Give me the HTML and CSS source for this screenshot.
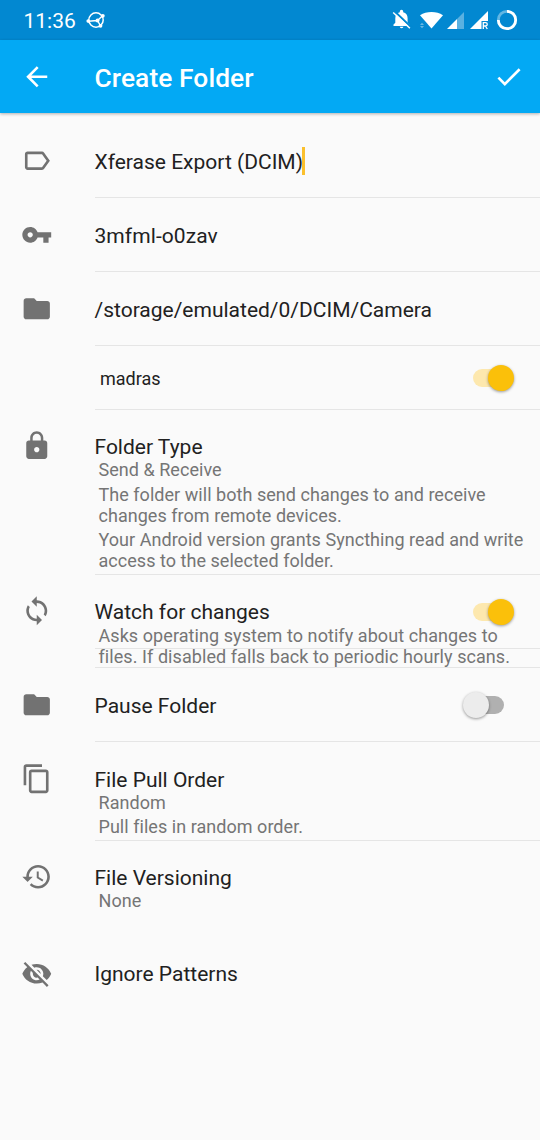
FILE: index.html
```html
<!DOCTYPE html>
<html lang="en">
<head>
<meta charset="utf-8">
<title>Create Folder</title>
<link rel="stylesheet" href="styles.css">
</head>
<body>
<div class="statusbar">
  <span class="clock">11:36</span>
  <svg class="sync-logo" viewBox="0 0 20 18" fill="none" stroke="#fff" stroke-width="1.5"><circle cx="10" cy="9" r="7.2"/><path d="M2 10.2L11.5 9.5L16.8 4.6M11.5 9.5L14.5 14.8" stroke-width="1.4"/><g fill="#fff" stroke="none"><circle cx="2.2" cy="10.1" r="1.8"/><circle cx="11.5" cy="9.5" r="2"/><circle cx="16.8" cy="4.8" r="1.9"/><circle cx="14.5" cy="14.8" r="1.9"/></g></svg>
  <svg class="status-icons" viewBox="0 0 130 40">
    <path fill="#fff" d="M393 26v-1.600l1.800-1.600v-4.600c0-3 1.700-5.200 4.500-5.900v-.8a1.700 1.700 0 0 1 3.400 0v.8c2.800.7 4.400 2.900 4.400 5.900v4.600l1.900 1.600v1.600zM399.300 26.800h3.600a1.800 1.400 0 0 1-3.600 0z" transform="translate(-389.500)"/>
    <path d="M4.500 11.300L21.500 27.500" stroke="#0288d1" stroke-width="2"/>
    <path d="M3.200 12.500L19.900 28.200" stroke="#fff" stroke-width="1.500"/>
    <path fill="#fff" d="M41.500 28.500L30 15.200Q35 12 41.500 12T53 15.200z"/>
    <path fill="#fff" opacity=".4" d="M30 25l2-2.300 2 2.300zM30 26l2 2.300 2-2.300z"/>
    <path fill="#fff" opacity=".35" d="M67 19L74 12V29H67z"/>
    <path fill="#fff" d="M57 29L67 19V29z"/>
    <path fill="#fff" d="M80 29L98 11V21H91.500V29z"/>
    <path d="M93.300 29V22.700H95.600a1.600 1.600 0 0 1 0 3.300H93.300M95.400 26L97.300 29" fill="none" stroke="#fff" stroke-width="1.300"/>
    <circle cx="117" cy="20" r="8.700" fill="none" stroke="#62b6e3" stroke-width="2.800"/>
    <path d="M117 11.300A8.700 8.700 0 1 1 108.300 20" fill="none" stroke="#fff" stroke-width="2.800"/>
  </svg>
</div>
<header class="appbar">
  <svg class="icon" viewBox="0 0 24 24"><path d="M20 11H7.830l5.590-5.590L12 4l-8 8 8 8 1.410-1.410L7.830 13H20v-2z"/></svg>
  <h1 class="appbar-title">Create Folder</h1>
  <svg class="icon" viewBox="0 0 24 24"><path d="M9 16.170L4.830 12l-1.420 1.410L9 19 21 7l-1.410-1.410z"/></svg>
</header>
<main class="form">
  <div class="row">
    <svg class="icon" viewBox="0 0 24 24"><path d="M17.630 5.840C17.270 5.330 16.670 5 16 5L5 5.010C3.900 5.010 3 5.900 3 7v10c0 1.100.9 1.990 2 1.990L16 19c.67 0 1.270-.33 1.630-.84L22 12l-4.370-6.160zM16 17H5V7h11l3.550 5L16 17z"/></svg>
    <div class="content"><div class="title label-field">Xferase Export (DCIM)<span class="caret"></span></div></div>
  </div>
  <div class="row">
    <svg class="icon" viewBox="0 0 24 24"><path d="M12.650 10C11.830 7.670 9.610 6 7 6c-3.310 0-6 2.690-6 6s2.690 6 6 6c2.610 0 4.830-1.670 5.650-4H17v4h4v-4h2v-4H12.650zM7 14c-1.100 0-2-.9-2-2s.9-2 2-2 2 .9 2 2-.9 2-2 2z"/></svg>
    <div class="content"><div class="title folder-id">3mfml-o0zav</div></div>
  </div>
  <div class="row">
    <svg class="icon" viewBox="0 0 24 24"><path d="M10 4H4c-1.100 0-1.990.9-1.990 2L2 18c0 1.100.9 2 2 2h16c1.100 0 2-.9 2-2V8c0-1.100-.9-2-2-2h-8l-2-2z"/></svg>
    <div class="content"><div class="title path">/storage/emulated/0/DCIM/Camera</div></div>
  </div>
  <div class="row device">
    <div class="content"><span class="device-name">madras</span><span class="switch on"></span></div>
  </div>
  <div class="row folder-type raised">
    <svg class="icon" viewBox="0 0 24 24"><path d="M18 8h-1V6c0-2.760-2.240-5-5-5S7 3.240 7 6v2H6c-1.100 0-2 .9-2 2v10c0 1.100.9 2 2 2h12c1.100 0 2-.9 2-2V10c0-1.100-.9-2-2-2zm-6 9c-1.100 0-2-.9-2-2s.9-2 2-2 2 .9 2 2-.9 2-2 2zm3.100-9H8.900V6c0-1.710 1.390-3.100 3.100-3.100 1.710 0 3.100 1.390 3.100 3.100v2z"/></svg>
    <div class="content">
      <div class="title">Folder Type</div>
      <p class="caption">Send &amp; Receive</p>
      <p class="caption">The folder will both send changes to and receive<br>changes from remote devices.</p>
      <p class="caption">Your Android version grants Syncthing read and write<br>access to the selected folder.</p>
    </div>
  </div>
  <div class="row watch raised">
    <svg class="icon" viewBox="0 0 24 24"><path d="M12 4V1L8 5l4 4V6c3.310 0 6 2.690 6 6 0 1.010-.25 1.970-.7 2.800l1.460 1.460C19.540 15.030 20 13.570 20 12c0-4.420-3.580-8-8-8zm0 14c-3.310 0-6-2.690-6-6 0-1.010.25-1.970.7-2.800L5.240 7.740C4.460 8.970 4 10.430 4 12c0 4.420 3.580 8 8 8v3l4-4-4-4v3z"/></svg>
    <div class="content">
      <div class="title">Watch for changes<span class="switch on"></span></div>
      <p class="caption">Asks operating system to notify about changes to<br>files. If disabled falls back to periodic hourly scans.</p>
    </div>
  </div>
  <div class="row spacer"><div class="content"></div></div>
  <div class="row">
    <svg class="icon" viewBox="0 0 24 24"><path d="M10 4H4c-1.100 0-1.990.9-1.990 2L2 18c0 1.100.9 2 2 2h16c1.100 0 2-.9 2-2V8c0-1.100-.9-2-2-2h-8l-2-2z"/></svg>
    <div class="content"><div class="title">Pause Folder<span class="switch off"></span></div></div>
  </div>
  <div class="row pull-order">
    <svg class="icon" viewBox="0 0 24 24"><path d="M16 1H4c-1.100 0-2 .9-2 2v14h2V3h12V1zm3 4H8c-1.100 0-2 .9-2 2v14c0 1.100.9 2 2 2h11c1.100 0 2-.9 2-2V7c0-1.100-.9-2-2-2zm0 16H8V7h11v14z"/></svg>
    <div class="content">
      <div class="title">File Pull Order</div>
      <p class="caption">Random</p>
      <p class="caption">Pull files in random order.</p>
    </div>
  </div>
  <div class="row versioning raised">
    <svg class="icon" viewBox="0 0 24 24"><path d="M13 3c-4.970 0-9 4.030-9 9H1l3.890 3.890.07.14L9 12H6c0-3.870 3.130-7 7-7s7 3.130 7 7-3.130 7-7 7c-1.930 0-3.680-.79-4.940-2.060l-1.420 1.420C8.270 19.990 10.510 21 13 21c4.970 0 9-4.030 9-9s-4.030-9-9-9zm-1 5v5l4.280 2.540.72-1.210-3.500-2.080V8H12z"/></svg>
    <div class="content">
      <div class="title">File Versioning</div>
      <p class="caption">None</p>
    </div>
  </div>
  <div class="row last">
    <svg class="icon" viewBox="0 0 24 24"><path d="M12 7c2.760 0 5 2.240 5 5 0 .65-.13 1.260-.36 1.830l2.920 2.920c1.510-1.260 2.700-2.890 3.430-4.750-1.730-4.390-6-7.500-11-7.500-1.400 0-2.740.25-3.980.7l2.160 2.160C10.740 7.130 11.350 7 12 7zM2 4.270l2.280 2.280.46.46C3.080 8.300 1.780 10.020 1 12c1.730 4.390 6 7.500 11 7.500 1.550 0 3.030-.3 4.380-.84l.42.42L19.730 22 21 20.730 3.270 3 2 4.270zM7.530 9.800l1.550 1.550c-.05.21-.08.43-.08.65 0 1.660 1.340 3 3 3 .22 0 .44-.03.65-.08l1.550 1.550c-.67.33-1.410.53-2.200.53-2.760 0-5-2.240-5-5 0-.79.2-1.530.53-2.200zm4.310-.78l3.150 3.150.02-.16c0-1.660-1.340-3-3-3l-.17.010z"/></svg>
    <div class="content"><div class="title">Ignore Patterns</div></div>
  </div>
</main>
</body>
</html>
```

FILE: styles.css
```css
body {
  margin: 0;
  height: 1140px;
  background: #fafafa;
  color: #212121;
  font-family: Roboto, sans-serif;
  overflow: hidden;
}

.statusbar {
  display: flex;
  align-items: center;
  height: 40px;
  padding-left: 23.5px;
  background: #0288d1;
  color: #fff;
}

.clock {
  width: 62px;
  padding-top: 2px;
  font-size: 21px;
  line-height: 38px;
}

.sync-logo {
  width: 20px;
  height: 18px;
}

.status-icons {
  width: 130px;
  height: 40px;
  margin-left: auto;
  margin-right: 20px;
}

.appbar {
  display: flex;
  align-items: center;
  height: 73px;
  padding: 0 16px 0 21px;
  background: #03a9f4;
  box-shadow: 0 1px 3px rgba(0, 0, 0, .3);
}

.appbar .icon {
  fill: #fff;
}

.appbar-title {
  flex: 1;
  margin: 2px 0 0 42px;
  color: #fff;
  font-size: 26.3px;
  font-weight: 500;
  letter-spacing: .1px;
}

.icon {
  flex: none;
  width: 31.5px;
  height: 31.5px;
  fill: #727272;
}

.form {
  padding-top: 11px;
}

.row {
  display: flex;
  height: 74px;
  padding-left: 21px;
}

.row > .icon {
  margin-top: 21px;
}

.content {
  box-sizing: border-box;
  flex: 1;
  height: 100%;
  margin-left: 42px;
  padding-top: 25px;
  border-bottom: 1px solid #e5e5e5;
}

.title {
  display: flex;
  align-items: center;
  height: 25px;
  font-size: 21px;
  white-space: nowrap;
}

.caret {
  width: 3px;
  height: 28px;
  margin: -2px 0 0 -1px;
  background: #fbc02d;
}

.folder-id {
  letter-spacing: .07px;
}

.caption {
  margin: 3.5px 0 0 4px;
  color: #757575;
  font-size: 18px;
  letter-spacing: .04px;
  line-height: 21px;
  white-space: nowrap;
}

.title + .caption {
  margin-top: 0;
}

.raised > .icon {
  margin-top: 20px;
}

.raised .content {
  padding-top: 24px;
}

.last .content {
  padding-top: 24.5px;
}

.watch .caption {
  margin-top: 1px;
  letter-spacing: .07px;
}

.device {
  height: 64px;
}

.device .content {
  display: flex;
  align-items: center;
  margin-left: 73.5px;
  padding: 0 0 0 5.5px;
}

.device-name {
  padding-top: 1px;
  font-size: 18px;
}

.folder-type {
  height: 165px;
}

.spacer {
  height: 19px;
}

.spacer .content {
  margin-left: 73.5px;
  padding: 0;
}

.pull-order {
  height: 99px;
}

.pull-order .content {
  padding-top: 25px;
}

.pull-order .title + .caption {
  margin-top: -.5px;
}

.pull-order .caption + .caption {
  margin-top: 3px;
}

.versioning {
  height: 96px;
}

.versioning .content,
.last .content {
  border: 0;
}

.switch {
  position: relative;
  width: 36.5px;
  height: 18px;
  margin-left: auto;
  border-radius: 9px;
}

.switch::after {
  content: "";
  position: absolute;
  top: -4px;
  width: 26px;
  height: 26px;
  border-radius: 50%;
  box-shadow: 0 1px 3px rgba(0, 0, 0, .4);
}

.switch.on {
  margin-right: 30.5px;
  background: #fde8ae;
}

.switch.on::after {
  right: -4.5px;
  background: #fbc00a;
}

.switch.off {
  margin: -2px 36px 0 auto;
  background: #b0b0b0;
}

.switch.off::after {
  left: -4.5px;
  background: #ececec;
}
```
